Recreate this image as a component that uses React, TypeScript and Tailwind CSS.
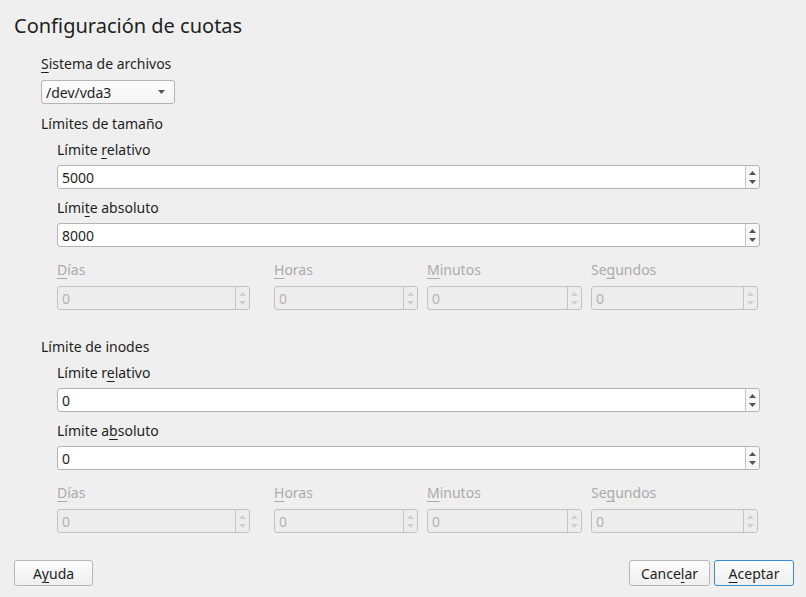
import React from 'react';

const Up = ({ color }: { color: string }) => (
    <svg width="7" height="4" viewBox="0 0 7 4"><path d="M0 4 L3.5 0 L7 4 Z" fill={color} /></svg>
);
const Down = ({ color }: { color: string }) => (
    <svg width="7" height="4" viewBox="0 0 7 4"><path d="M0 0 L7 0 L3.5 4 Z" fill={color} /></svg>
);

const Label = ({ pre, u, post, disabled }: any) => (
    <div className={`h-[20px] leading-[20px] whitespace-nowrap ${disabled ? 'text-[#ababab]' : 'text-[#1e1e1e]'}`}>
        {pre}<span className="underline underline-offset-[3px] decoration-1">{u}</span>{post}
    </div>
);

const Spin = ({ value, disabled, className }: any) => (
    <div className={`flex h-[24px] rounded-[3px] border ${disabled ? 'border-[#c2c2c2] bg-[#ededed]' : 'border-[#b4b4b4] bg-white'} ${className || ''}`}>
        <div className={`flex-1 flex items-center pl-[4px] ${disabled ? 'text-[#b3b3b3]' : 'text-[#1e1e1e]'}`}>{value}</div>
        <div className={`w-[14px] flex flex-col items-center justify-center gap-[5px] border-l rounded-r-[3px] ${disabled ? 'border-[#c6c6c6] bg-[#ededed]' : 'border-[#c6c6c6] bg-[#f7f7f7]'}`}>
            <Up color={disabled ? '#d0d0d0' : '#555'} />
            <Down color={disabled ? '#d0d0d0' : '#555'} />
        </div>
    </div>
);

const Button = ({ pre, u, post, primary, className }: any) => (
    <div className={`h-[26px] flex items-center justify-center rounded-[3px] border bg-gradient-to-b from-[#fcfcfc] to-[#efefef] text-[#1e1e1e] ${primary ? 'border-[#3b8ccb]' : 'border-[#b7b7b7]'} ${className || ''}`}>
        <span>{pre}<span className="underline underline-offset-[3px] decoration-1">{u}</span>{post}</span>
    </div>
);

const TimeRow = () => (
    <div className="flex pl-[57px] w-[758px]">
        <div className="w-[193px] mr-[24px]">
            <Label u="D" post="ías" disabled />
            <Spin value="0" disabled className="mt-[6px]" />
        </div>
        <div className="w-[144px] mr-[9px]">
            <Label u="H" post="oras" disabled />
            <Spin value="0" disabled className="mt-[6px]" />
        </div>
        <div className="w-[155px] mr-[9px]">
            <Label u="M" post="inutos" disabled />
            <Spin value="0" disabled className="mt-[6px]" />
        </div>
        <div className="flex-1">
            <Label pre="Se" u="g" post="undos" disabled />
            <Spin value="0" disabled className="mt-[6px]" />
        </div>
    </div>
);

const LimitGroup = ({ title, relU, absPre, absU, absPost, rel, abs }: any) => (
    <div>
        <div className="pl-[41px] h-[20px] leading-[20px] text-[#1e1e1e]">{title}</div>
        <div className="pl-[57px] w-[760px]">
            <div className="mt-[6px]">
                <Label pre={relU.pre} u={relU.u} post={relU.post} />
            </div>
            <Spin value={rel} className="mt-[5px]" />
            <div className="mt-[9px]">
                <Label pre={absPre} u={absU} post={absPost} />
            </div>
            <Spin value={abs} className="mt-[5px]" />
        </div>
        <div className="mt-[13px]">
            <TimeRow />
        </div>
    </div>
);

export default function App() {
    return (
        <div className="w-[806px] h-[597px] bg-[#efefef] flex flex-col font-['Noto_Sans',sans-serif] text-[14px]">
            <div className="pl-[14px] pt-[13px] h-[39px] leading-[26px] text-[20px] text-[#1e1e1e]">Configuración de cuotas</div>

            <div className="pl-[41px] mt-[15px]">
                <Label u="S" post="istema de archivos" />
                <div className="mt-[6px] w-[134px] h-[24px] rounded-[3px] border border-[#b4b4b4] bg-gradient-to-b from-[#fdfdfd] to-[#f4f4f4] flex items-center justify-between pl-[4px] pr-[9px] text-[#1e1e1e]">
                    <span>/dev/vda3</span>
                    <Down color="#555" />
                </div>
            </div>

            <div className="mt-[10px]">
                <LimitGroup
                    title="Límites de tamaño"
                    relU={{ pre: 'Límite ', u: 'r', post: 'elativo' }}
                    absPre="Lími" absU="t" absPost="e absoluto"
                    rel="5000" abs="8000"
                />
            </div>

            <div className="mt-[27px]">
                <LimitGroup
                    title="Límite de inodes"
                    relU={{ pre: 'Límite r', u: 'e', post: 'lativo' }}
                    absPre="Límite a" absU="b" absPost="soluto"
                    rel="0" abs="0"
                />
            </div>

            <div className="flex-1" />
            <div className="flex items-center pl-[14px] pr-[12px] pb-[11px]">
                <Button pre="A" u="y" post="uda" className="w-[79px]" />
                <div className="flex-1" />
                <Button pre="Cance" u="l" post="ar" className="w-[81px]" />
                <Button u="A" post="ceptar" primary className="w-[80px] ml-[4px]" />
            </div>
        </div>
    );
}
